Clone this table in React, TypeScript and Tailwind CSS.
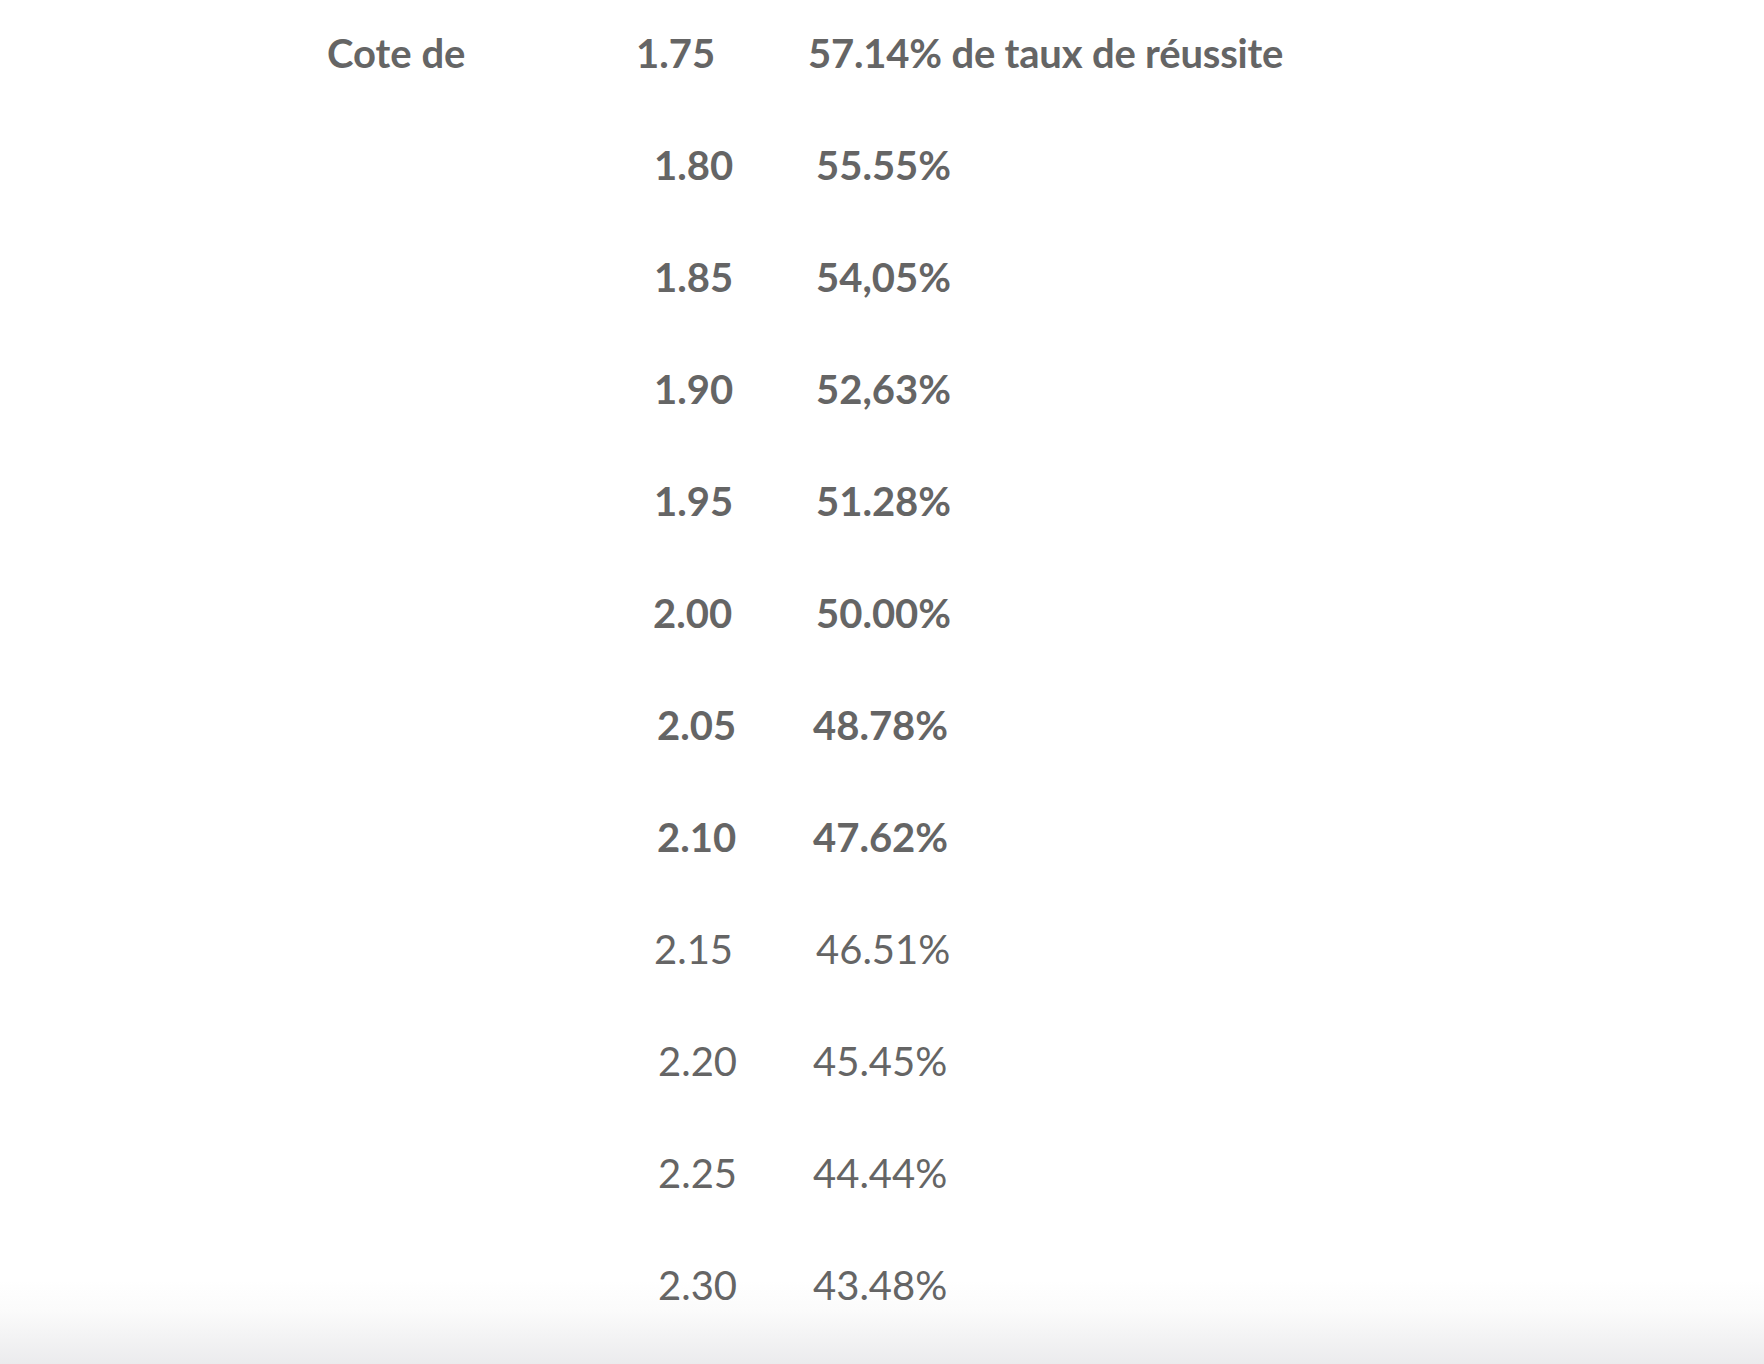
import React from "react";

export default function App() {
  return (
    <div
      className="h-[1364px] w-full overflow-hidden bg-[linear-gradient(to_bottom,#ffffff_0px,#ffffff_1280px,#fbfbfb_1310px,#ebebed_1364px)] text-[40px] leading-[112px] text-[#656565]"
      style={{ fontFamily: "Lato, 'Open Sans', sans-serif" }}
    >
      <div className="-mt-[3px] flex flex-col">
        <div className="flex h-[112px] pl-[327px] font-bold whitespace-nowrap">
          <span className="w-[309px]">Cote de</span>
          <span className="w-[172px]">1.75</span>
          <span className="tracking-[-0.2px]">57.14% de taux de réussite</span>
        </div>
        <div className="flex h-[112px] pl-[654px] font-bold whitespace-nowrap">
          <span className="w-[162px]">1.80</span>
          <span>55.55%</span>
        </div>
        <div className="flex h-[112px] pl-[654px] font-bold whitespace-nowrap">
          <span className="w-[162px]">1.85</span>
          <span>54,05%</span>
        </div>
        <div className="flex h-[112px] pl-[654px] font-bold whitespace-nowrap">
          <span className="w-[162px]">1.90</span>
          <span>52,63%</span>
        </div>
        <div className="flex h-[112px] pl-[654px] font-bold whitespace-nowrap">
          <span className="w-[162px]">1.95</span>
          <span>51.28%</span>
        </div>
        <div className="flex h-[112px] pl-[653px] font-bold whitespace-nowrap">
          <span className="w-[163px]">2.00</span>
          <span>50.00%</span>
        </div>
        <div className="flex h-[112px] pl-[657px] font-bold whitespace-nowrap">
          <span className="w-[156px]">2.05</span>
          <span>48.78%</span>
        </div>
        <div className="flex h-[112px] pl-[657px] font-bold whitespace-nowrap">
          <span className="w-[156px]">2.10</span>
          <span>47.62%</span>
        </div>
        <div className="flex h-[112px] pl-[654px] font-normal whitespace-nowrap">
          <span className="w-[162px]">2.15</span>
          <span>46.51%</span>
        </div>
        <div className="flex h-[112px] pl-[658px] font-normal whitespace-nowrap">
          <span className="w-[155px]">2.20</span>
          <span>45.45%</span>
        </div>
        <div className="flex h-[112px] pl-[658px] font-normal whitespace-nowrap">
          <span className="w-[155px]">2.25</span>
          <span>44.44%</span>
        </div>
        <div className="flex h-[112px] pl-[658px] font-normal whitespace-nowrap">
          <span className="w-[155px]">2.30</span>
          <span>43.48%</span>
        </div>
      </div>
    </div>
  );
}
